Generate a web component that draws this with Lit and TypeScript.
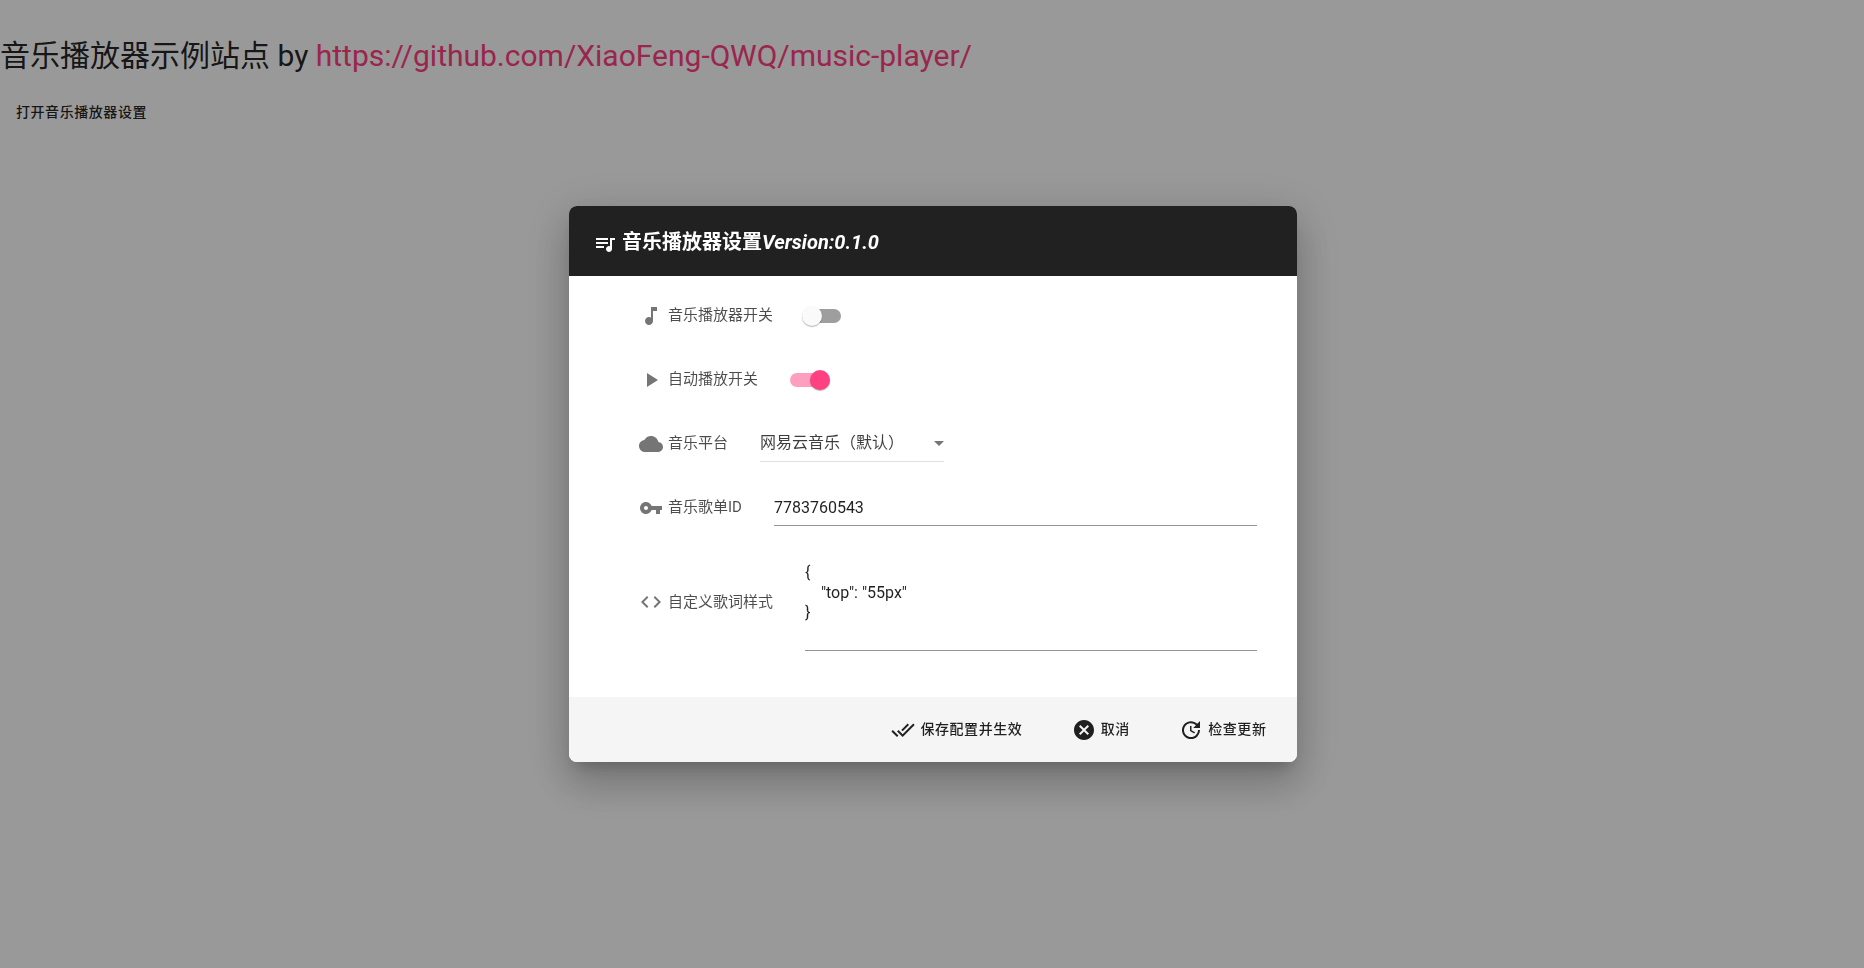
import { LitElement, html, css, svg } from "lit";
import { customElement, state } from "lit/decorators.js";

const ICONS: Record<string, string> = {
  queue: "M15 6H3v2h12V6zm0 4H3v2h12v-2zM3 16h8v-2H3v2zM17 6v8.18c-.31-.11-.65-.18-1-.18-1.66 0-3 1.34-3 3s1.34 3 3 3 3-1.34 3-3V8h3V6h-5z",
  note: "M12 3v10.55c-.59-.34-1.27-.55-2-.55-2.21 0-4 1.79-4 4s1.79 4 4 4 4-1.79 4-4V7h4V3h-6z",
  play: "M8 5v14l11-7z",
  cloud: "M19.35 10.04C18.67 6.59 15.64 4 12 4 9.11 4 6.6 5.64 5.35 8.04 2.34 8.36 0 10.91 0 14c0 3.31 2.69 6 6 6h13c2.76 0 5-2.24 5-5 0-2.64-2.05-4.78-4.65-4.96z",
  key: "M12.65 10C11.83 7.67 9.61 6 7 6c-3.31 0-6 2.69-6 6s2.69 6 6 6c2.61 0 4.83-1.67 5.65-4H17v4h4v-4h2v-4H12.65zM7 14c-1.1 0-2-.9-2-2s.9-2 2-2 2 .9 2 2-.9 2-2 2z",
  code: "M9.4 16.6L4.8 12l4.6-4.6L8 6l-6 6 6 6 1.4-1.4zm5.2 0l4.6-4.6-4.6-4.6L16 6l6 6-6 6-1.4-1.4z",
  done: "M18 7l-1.41-1.41-6.34 6.34 1.41 1.41L18 7zm4.24-1.41L11.66 16.17 7.48 12l-1.41 1.41L11.66 19l12-12-1.42-1.41zM.41 13.41L6 19l1.41-1.41L1.83 12 .41 13.41z",
  cancel: "M12 2C6.47 2 2 6.47 2 12s4.47 10 10 10 10-4.47 10-10S17.53 2 12 2zm5 13.59L15.59 17 12 13.41 8.41 17 7 15.59 10.59 12 7 8.41 8.41 7 12 10.59 15.59 7 17 8.41 13.41 12 17 15.59z",
  update: "M21 10.12h-6.78l2.74-2.82c-2.73-2.7-7.15-2.8-9.88-.1-2.73 2.71-2.73 7.08 0 9.79s7.15 2.71 9.88 0C18.32 15.65 19 14.08 19 12.1h2c0 1.98-.88 4.55-2.64 6.29-3.51 3.48-9.21 3.48-12.72 0-3.5-3.47-3.53-9.11-.02-12.58s9.14-3.47 12.65 0L21 3v7.12zM12.5 8v4.25l3.5 2.08-.72 1.21L11 13V8h1.5z",
};

const icon = (name: string) =>
  html`<svg class="icon" viewBox="0 0 24 24">${svg`<path d=${ICONS[name]}></path>`}</svg>`;

@customElement("app-root")
export class AppRoot extends LitElement {
  @state() private enabled = false;
  @state() private autoplay = true;

  static styles = css`
    :host {
      display: block;
      height: 100vh;
      overflow: hidden;
      background: #fff;
      color: rgba(0, 0, 0, 0.87);
      font-family: Roboto, "Noto Sans CJK SC", sans-serif;
    }
    * { box-sizing: border-box; }
    .page { padding-top: 35px; }
    h1 { margin: 0; font-size: 30px; font-weight: 400; line-height: 41px; }
    a { color: #ff4081; text-decoration: none; }
    button {
      display: flex;
      align-items: center;
      height: 36px;
      padding: 0 16px;
      border: 0;
      background: none;
      color: inherit;
      font: 500 14px/36px Roboto, "Noto Sans CJK SC", sans-serif;
      letter-spacing: 0.04em;
      white-space: nowrap;
    }
    .open { margin-top: 17.5px; }
    .overlay {
      position: fixed;
      inset: 0;
      display: flex;
      align-items: center;
      justify-content: center;
      padding-left: 2px;
      background: rgba(0, 0, 0, 0.4);
    }
    .dialog {
      width: 728px;
      height: 556px;
      display: flex;
      flex-direction: column;
      overflow: hidden;
      border-radius: 8px;
      background: #fff;
      box-shadow: 0 11px 15px -7px rgba(0, 0, 0, 0.2),
        0 24px 38px 3px rgba(0, 0, 0, 0.14), 0 9px 46px 8px rgba(0, 0, 0, 0.12);
    }
    .icon { display: block; flex: none; width: 24px; height: 24px; fill: currentColor; }
    header {
      display: flex;
      align-items: center;
      flex: none;
      height: 70px;
      padding: 2px 24px 0;
      background: #212121;
      color: #fff;
      font-size: 20px;
      font-weight: 600;
      line-height: 30px;
    }
    header i { font-weight: 700; }
    header .icon { margin: 4px 5px 0 0; }
    .body { flex: 1; padding: 8px 40px 0 70px; }
    .row { display: flex; align-items: center; height: 64px; }
    .row.tall { height: 124px; }
    .row > .icon { margin-right: 5px; color: #757575; }
    .label {
      flex: none;
      margin-right: 32px;
      color: rgba(0, 0, 0, 0.7);
      font-size: 15px;
      line-height: 24px;
      padding-bottom: 2px;
    }
    .tall .label { padding-bottom: 0; }
    .switch {
      display: flex;
      align-items: center;
      width: 36px;
      height: 14px;
      border-radius: 7px;
      background: #9e9e9e;
    }
    .thumb {
      flex: none;
      width: 20px;
      height: 20px;
      margin-left: -3px;
      border-radius: 50%;
      background: #fafafa;
      box-shadow: 0 1px 1px rgba(0, 0, 0, 0.3);
    }
    .switch.on { background: #ff9fc0; }
    .switch.on .thumb { margin-left: 20px; background: #ff4081; }
    .select {
      display: flex;
      align-items: center;
      justify-content: space-between;
      width: 184px;
      height: 36px;
      border-bottom: 1px solid #dfdfdf;
      color: rgba(0, 0, 0, 0.76);
      font-size: 16px;
      line-height: 24px;
    }
    .select .value { padding-bottom: 1px; }
    .arrow { width: 10px; height: 5px; fill: #757575; margin-bottom: 1px; }
    .field {
      flex: 1;
      height: 36px;
      border-bottom: 1px solid #949494;
      font-size: 16px;
      line-height: 36px;
    }
    .field.area { height: 92px; margin-top: 6px; padding-top: 4px; line-height: 19.8px; white-space: pre; }
    footer {
      display: flex;
      align-items: center;
      justify-content: flex-end;
      flex: none;
      gap: 17.4px;
      height: 65px;
      padding-right: 14.5px;
      background: #f5f5f5;
    }
    footer .icon { margin-right: 5px; }
    footer span { padding-bottom: 2px; }
  `;

  private toggle(on: boolean, flip: () => void) {
    return html`<div class="switch ${on ? "on" : ""}" @click=${flip}><div class="thumb"></div></div>`;
  }

  render() {
    return html`
      <div class="page">
        <h1>音乐播放器示例站点 by <a href="#">https://github.com/XiaoFeng-QWQ/music-player/</a></h1>
        <button class="open">打开音乐播放器设置</button>
      </div>
      <div class="overlay">
        <div class="dialog">
          <header>${icon("queue")}<span>音乐播放器设置<i>Version:0.1.0</i></span></header>
          <div class="body">
            <div class="row">${icon("note")}<span class="label">音乐播放器开关</span>${this.toggle(this.enabled, () => (this.enabled = !this.enabled))}</div>
            <div class="row">${icon("play")}<span class="label">自动播放开关</span>${this.toggle(this.autoplay, () => (this.autoplay = !this.autoplay))}</div>
            <div class="row">
              ${icon("cloud")}<span class="label">音乐平台</span>
              <div class="select"><span class="value">网易云音乐（默认）</span><svg class="arrow" viewBox="0 0 10 5"><path d="M0 0l5 5 5-5z"></path></svg></div>
            </div>
            <div class="row">${icon("key")}<span class="label">音乐歌单ID</span><div class="field">7783760543</div></div>
            <div class="row tall">${icon("code")}<span class="label">自定义歌词样式</span><div class="field area">${'{\n    "top": "55px"\n}'}</div></div>
          </div>
          <footer>
            <button>${icon("done")}<span>保存配置并生效</span></button>
            <button>${icon("cancel")}<span>取消</span></button>
            <button>${icon("update")}<span>检查更新</span></button>
          </footer>
        </div>
      </div>
    `;
  }
}
